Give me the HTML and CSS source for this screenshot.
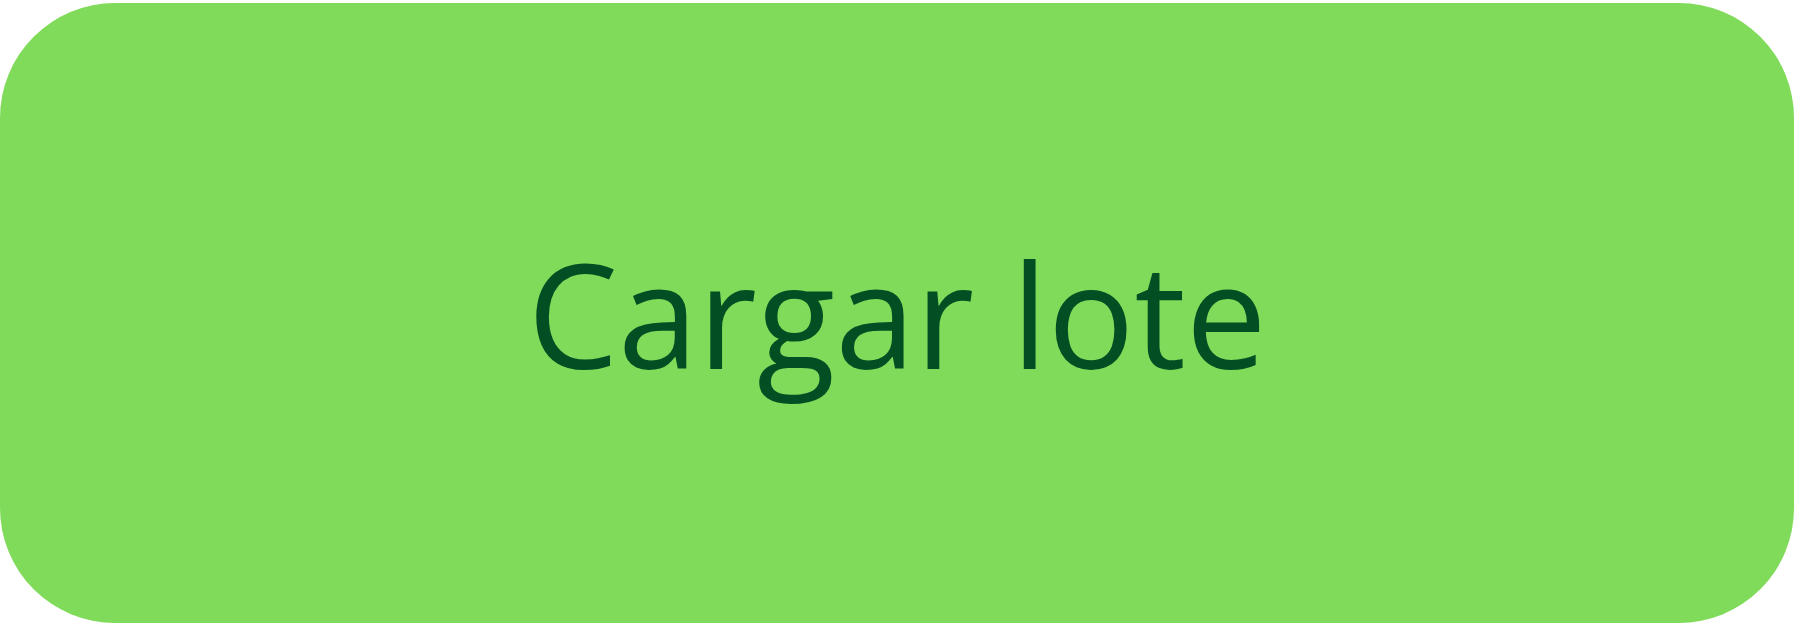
FILE: index.html
```html
<!DOCTYPE html>
<html lang="es">
<head>
<meta charset="utf-8">
<title>Cargar lote</title>
<link rel="stylesheet" href="styles.css">
</head>
<body>
<div class="page">
  <button class="load-btn" type="button">Cargar lote</button>
</div>
</body>
</html>
```
FILE: styles.css
```css
html, body {
  margin: 0;
  padding: 0;
  background: #ffffff;
}
.page {
  width: 1794px;
  height: 627px;
  padding-top: 3px;
  box-sizing: border-box;
}
.load-btn {
  display: flex;
  align-items: center;
  justify-content: center;
  width: 1794px;
  height: 620px;
  margin: 0;
  padding: 0;
  border: none;
  border-radius: 115px;
  background: #80db5a;
  color: #034f23;
  font-family: "Open Sans", sans-serif;
  font-size: 144px;
  font-weight: 400;
  line-height: normal;
  cursor: pointer;
}
```
